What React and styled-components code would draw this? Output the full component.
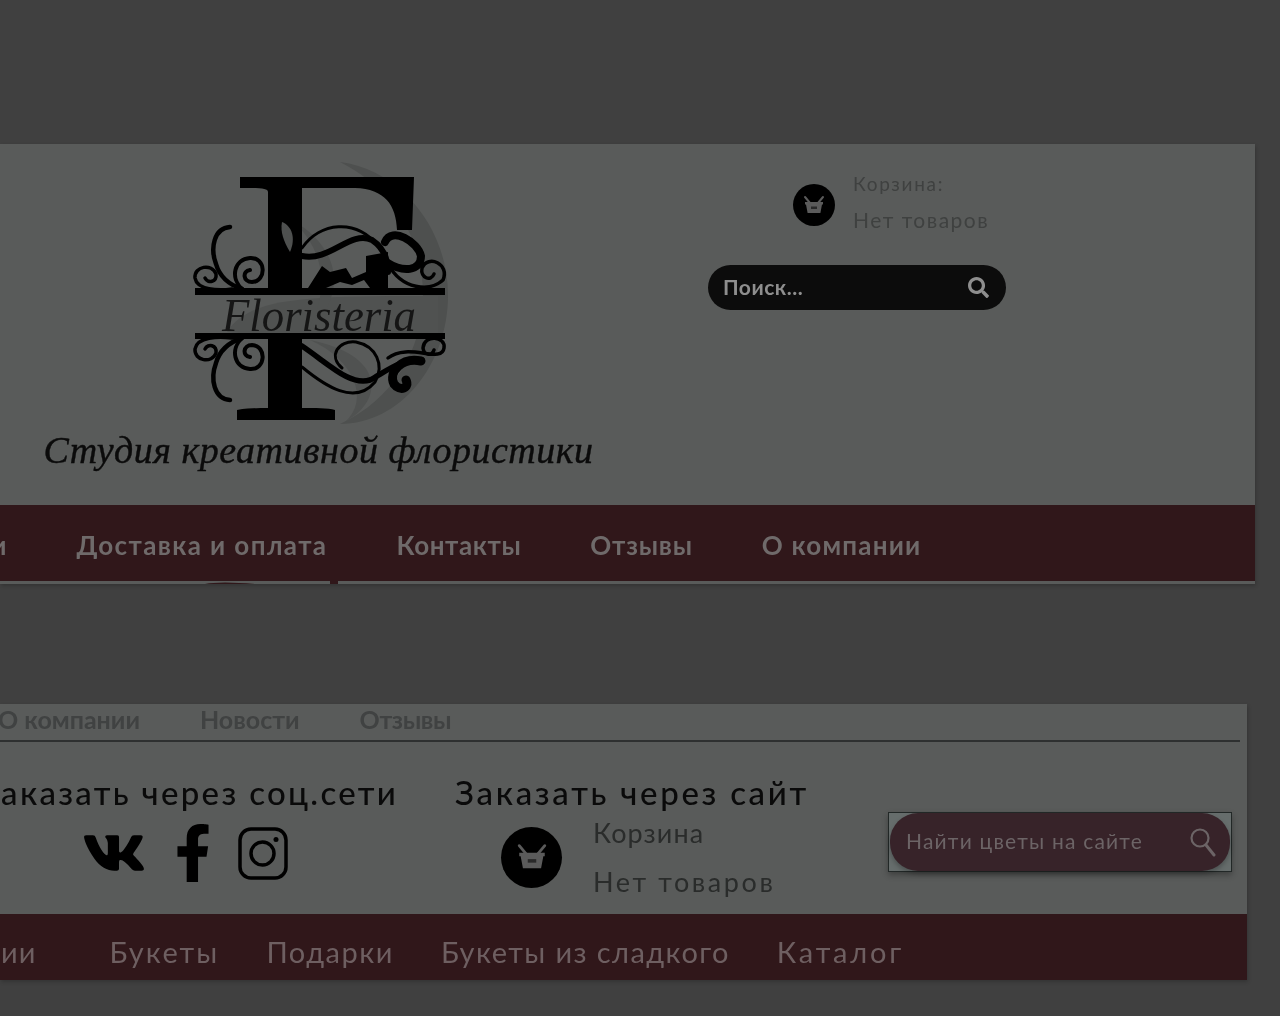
import React from 'react';
import styled, { createGlobalStyle } from 'styled-components';
import { FaVk, FaFacebookF, FaSearch } from 'react-icons/fa';

const Global = createGlobalStyle`
  html, body { margin: 0; padding: 0; background: #404040; }
  body { font-family: Lato, "Noto Sans", sans-serif; overflow-x: hidden; }
`;
const Page = styled.div`
  height: 1016px; box-sizing: border-box; padding-top: 144px; background: #404040;
  display: flex; flex-direction: column; gap: 120px; overflow: hidden;
`;
const Panel = styled.section`
  width: ${p => p.$w}px; height: ${p => p.$h}px; background: #595b5a; overflow: hidden;
  display: flex; flex-direction: column; box-shadow: 1px 2px 4px rgba(0,0,0,.2);
`;
const Header = styled.header`height: 361px; display: flex; flex: none;`;
const Brand = styled.div`
  width: 640px; flex: none; display: flex; flex-direction: column; align-items: center;
`;
const LogoSvg = styled.svg`width: 280px; height: 270px; margin-top: 16px; flex: none; filter: blur(.6px);`;
const Tagline = styled.div`
  font-family: "Liberation Serif", serif; font-style: italic; font-size: 38px; line-height: 46px;
  letter-spacing: .5px; color: #0b0b0b; white-space: nowrap; margin-top: -3px; margin-left: -3px;
  -webkit-text-stroke: .4px #0b0b0b; filter: blur(.5px);
`;
const Side = styled.div`
  margin-left: 68px; width: 300px; padding-top: 22px; display: flex; flex-direction: column;
`;
const CartTop = styled.div`display: flex; align-items: center; gap: 18px; margin-left: 85px; height: 78px;`;
const Round = styled.span`
  width: ${p => p.$s}px; height: ${p => p.$s}px; border-radius: 50%; background: #000; flex: none;
  display: flex; align-items: center; justify-content: center;
`;
const CartLines = styled.div`
  display: flex; flex-direction: column; gap: ${p => p.$gap}px; margin: 0 0 ${p => p.$mb || 0}px ${p => p.$ml || 0}px;
`;
const CartLine = styled.span`
  font-size: ${p => p.$fs}px; line-height: ${p => p.$lh}px; color: ${p => p.$c};
  letter-spacing: ${p => p.$ls}px; white-space: nowrap; filter: blur(.4px);
`;
const PillTop = styled.div`
  width: 298px; height: 45px; margin-top: 21px; box-sizing: border-box; border-radius: 23px; background: #0c0c0c;
  display: flex; align-items: center; justify-content: space-between; padding: 0 17px 0 15px;
  color: #8e8e8e; filter: blur(.4px);
`;
const PillText = styled.span`font-size: 21px; font-weight: 700; letter-spacing: .5px; margin-bottom: 3px;`;
const NavTop = styled.nav`
  height: 76px; flex: none; background: #30171a; display: flex; align-items: center; gap: 69px;
  margin-left: -76px; padding-top: 3px; box-sizing: border-box;
`;
const NavTopItem = styled.a`
  font-size: 26px; font-weight: 700; color: #6f6a6a; letter-spacing: ${p => p.$ls}px; white-space: nowrap; filter: blur(.6px);
`;
const Strip = styled.svg`display: block; width: 1255px; height: 3px; flex: none;`;
const Tabs = styled.nav`
  height: 36px; box-sizing: border-box; padding-bottom: 6px; flex: none; display: flex; align-items: center; gap: 60px; margin-left: -2px;
`;
const Tab = styled.a`
  font-size: 25px; font-weight: 700; color: #404242; letter-spacing: ${p => p.$ls}px; white-space: nowrap; filter: blur(.6px);
`;
const Rule = styled.hr`
  margin: 0; border: 0; height: 2px; width: 1240px; flex: none; background: #2e3030;
`;
const Order = styled.div`height: 172px; flex: none; display: flex;`;
const Col = styled.div`
  width: ${p => p.$w}px; margin-left: ${p => p.$ml}px; flex: none; display: flex; flex-direction: column;
`;
const Heading = styled.h3`
  margin: 32px 0 0; font-size: 33px; line-height: 36px; font-weight: 500; color: #0a0a0a; white-space: nowrap;
  letter-spacing: ${p => p.$ls}px; filter: blur(.4px);
`;
const Socials = styled.div`display: flex; align-items: center; margin: 13px 0 0 102px; height: 60px; color: #000;`;
const SocialSlot = styled.span`display: flex; margin-left: ${p => p.$ml}px;`;
const CartBottom = styled.div`display: flex; align-items: center; gap: 31px; margin: 7px 0 0 46px; height: 80px;`;
const SearchFrame = styled.div`
  width: 344px; height: 60px; box-sizing: border-box; border: 1px solid #222827; background: #666d6c;
  margin: 70px 15px 0 auto; flex: none; display: flex; padding: 0 1px;
  box-shadow: 0 3px 6px rgba(0,0,0,.3);
`;
const SearchPill = styled.div`
  flex: 1; border-radius: 28px; background: #372329; display: flex; align-items: center; justify-content: space-between;
  padding: 0 13px 0 16px; color: #6c6466; box-shadow: 0 3px 5px rgba(0,0,0,.25);
`;
const SearchText = styled.span`font-size: 21px; letter-spacing: 1.2px; white-space: nowrap; margin-bottom: 3px; filter: blur(.3px);`;
const NavBottom = styled.nav`
  height: 67px; flex: none; box-sizing: border-box; padding-top: 8px; background: #30171a; display: flex; align-items: center; gap: 47px; margin-left: -54px;
`;
const NavBottomItem = styled.a`
  font-size: 29px; color: #6e5f61; letter-spacing: ${p => p.$ls}px; white-space: nowrap; margin-right: ${p => p.$mr || 0}px; filter: blur(.4px);
`;

const Basket = ({ s }) => (
  <svg width={s} height={s} viewBox="0 0 24 24" fill="none">
    <path d="M3 4 8 10M21 4l-5 6" stroke="#5b5b5b" strokeWidth="2" strokeLinecap="round" />
    <path d="M3 9h18v2.5h-1l-1.6 8.5H5.600L4 11.500H3z" fill="#5b5b5b" />
    <path d="M9 13.500h6v2.500H9z" fill="#000" opacity=".55" />
  </svg>
);

const Instagram = () => (
  <svg width="50" height="53" viewBox="0 0 50 53" fill="none" stroke="#000" strokeWidth="3.500">
    <rect x="2" y="2" width="46" height="49" rx="11" />
    <circle cx="24.500" cy="26.500" r="11.500" />
    <circle cx="38" cy="12.500" r="2.500" fill="#000" stroke="none" />
  </svg>
);

const ThinSearch = () => (
  <svg width="28" height="30" viewBox="0 0 28 30" fill="none" stroke="currentColor" strokeLinecap="round">
    <circle cx="11" cy="11" r="8.500" strokeWidth="2.200" />
    <path d="M17 18 25 28" strokeWidth="3" />
  </svg>
);

const Flourish = () => (
  <g fill="none" stroke="#000" strokeLinecap="round">
    <path d="M50 67C34 68 30 88 36 104 40 118 50 125 62 129" strokeWidth="4.500" />
    <path d="M62 129C50 118 54 99 70 98 86 97 87 121 72 122 63 122 62 111 70 110" strokeWidth="4" />
    <path d="M52 129C38 131 17 130 15 118 14 106 32 103 36 114 37 122 28 124 25 118" strokeWidth="3.500" />
  </g>
);

const Logo = () => (
  <LogoSvg viewBox="0 0 280 270">
    <path d="M160 2C222 10 268 70 268 135 268 205 220 264 160 264 212 240 243 190 243 135 243 78 212 28 160 2Z" fill="#4e504f" />
    <path d="M47 172C70 136 130 136 258 136V173H60Z" fill="#505251" />
    <path d="M112 60C145 90 150 130 128 170 165 140 165 90 112 60Z" fill="#505251" />
    <path d="M130 180C175 200 190 240 165 262 205 240 205 195 130 180Z" fill="#505251" />
    <g fill="#000">
      <path d="M60 17H234L232 70H217C216 45 205 29 175 28H122V128H88V32C88 28 80 28 60 28Z" />
      <path d="M88 179H122V248C135 248 148 248 155 250V260H57V250C68 248 80 248 88 248Z" />
      <rect x="15" y="128" width="250" height="7" />
      <rect x="15" y="173" width="250" height="6" />
      <path d="M128 128 142 106 150 112 166 108 172 118 186 112V96L208 92V128H190L184 120 172 125 160 122 146 128Z" />
    </g>
    <path d="M102 62C112 66 116 78 110 92 104 82 100 72 102 62Z" fill="#4e504f" />
    <Flourish />
    <g transform="matrix(1 0 0 -1 0 307)"><Flourish /></g>
    <g fill="none" stroke="#000" strokeLinecap="round">
      <path d="M122 96C150 102 170 70 192 80 204 88 208 100 208 112" strokeWidth="6" />
      <path d="M122 88C140 62 176 58 198 86" strokeWidth="3" />
      <path d="M205 82C212 66 238 82 241 96 241 112 222 112 208 103" strokeWidth="8" />
      <path d="M208 104C222 130 250 132 263 120 270 104 248 94 242 108 240 118 251 122 254 114" strokeWidth="3.500" />
      <path d="M122 186C150 205 170 226 190 220 205 212 222 198 242 200" strokeWidth="5.500" />
      <path d="M122 207C145 226 175 246 195 222 205 205 196 186 176 182 158 180 148 196 162 208" strokeWidth="3" />
      <path d="M241 201C222 197 208 212 214 224 220 232 230 228 226 220" strokeWidth="9" />
      <path d="M208 198C228 182 262 204 264 188 266 176 244 174 243 188 244 196 252 196 254 190" strokeWidth="3.500" />
    </g>
    <text x="42" y="171" textLength="194" lengthAdjust="spacingAndGlyphs" fontFamily="'Liberation Serif', serif" fontStyle="italic" fontSize="46" fill="#0a0a0a" fillOpacity=".85">Floristeria</text>
  </LogoSvg>
);

export default function App() {
  return (
    <Page>
      <Global />
      <Panel $w={1255} $h={440}>
        <Header>
          <Brand>
            <Logo />
            <Tagline>Студия креативной флористики</Tagline>
          </Brand>
          <Side>
            <CartTop>
              <Round $s={42}><Basket s={24} /></Round>
              <CartLines $gap={10} $mb={6}>
                <CartLine $fs={19} $lh={26} $ls={1.7} $c="#3f4140">Корзина:</CartLine>
                <CartLine $fs={21} $lh={26} $ls={1.5} $c="#3f4140">Нет товаров</CartLine>
              </CartLines>
            </CartTop>
            <PillTop>
              <PillText>Поиск...</PillText>
              <FaSearch size={21} />
            </PillTop>
          </Side>
        </Header>
        <NavTop>
          <NavTopItem $ls={1}>Акции</NavTopItem>
          <NavTopItem $ls={1.4}>Доставка и оплата</NavTopItem>
          <NavTopItem $ls={.6}>Контакты</NavTopItem>
          <NavTopItem $ls={.8}>Отзывы</NavTopItem>
          <NavTopItem $ls={1.2}>О компании</NavTopItem>
        </NavTop>
        <Strip viewBox="0 0 1255 3"><path d="M205 3Q220 0 255 3ZM330 0h8v3h-8z" fill="#30171a" /></Strip>
      </Panel>
      <Panel $w={1247} $h={276}>
        <Tabs>
          <Tab $ls={0}>О компании</Tab>
          <Tab $ls={0}>Новости</Tab>
          <Tab $ls={-.4}>Отзывы</Tab>
        </Tabs>
        <Rule />
        <Order>
          <Col $w={415} $ml={-20}>
            <Heading $ls={2.3}>Заказать через соц.сети</Heading>
            <Socials>
              <FaVk size={64} />
              <SocialSlot $ml={18}><FaFacebookF size={58} /></SocialSlot>
              <SocialSlot $ml={16}><Instagram /></SocialSlot>
            </Socials>
          </Col>
          <Col $w={360} $ml={60}>
            <Heading $ls={2.7}>Заказать через сайт</Heading>
            <CartBottom>
              <Round $s={61}><Basket s={34} /></Round>
              <CartLines $gap={19}>
                <CartLine $fs={27} $lh={30} $ls={1.1} $c="#2a2c2b">Корзина</CartLine>
                <CartLine $fs={27} $lh={30} $ls={2.6} $c="#2a2c2b">Нет товаров</CartLine>
              </CartLines>
            </CartBottom>
          </Col>
          <SearchFrame>
            <SearchPill>
              <SearchText>Найти цветы на сайте</SearchText>
              <ThinSearch />
            </SearchPill>
          </SearchFrame>
        </Order>
        <NavBottom>
          <NavBottomItem $ls={1} $mr={26}>Акции</NavBottomItem>
          <NavBottomItem $ls={2.1}>Букеты</NavBottomItem>
          <NavBottomItem $ls={1.5}>Подарки</NavBottomItem>
          <NavBottomItem $ls={1.4}>Букеты из сладкого</NavBottomItem>
          <NavBottomItem $ls={2.8}>Каталог</NavBottomItem>
        </NavBottom>
      </Panel>
    </Page>
  );
}
